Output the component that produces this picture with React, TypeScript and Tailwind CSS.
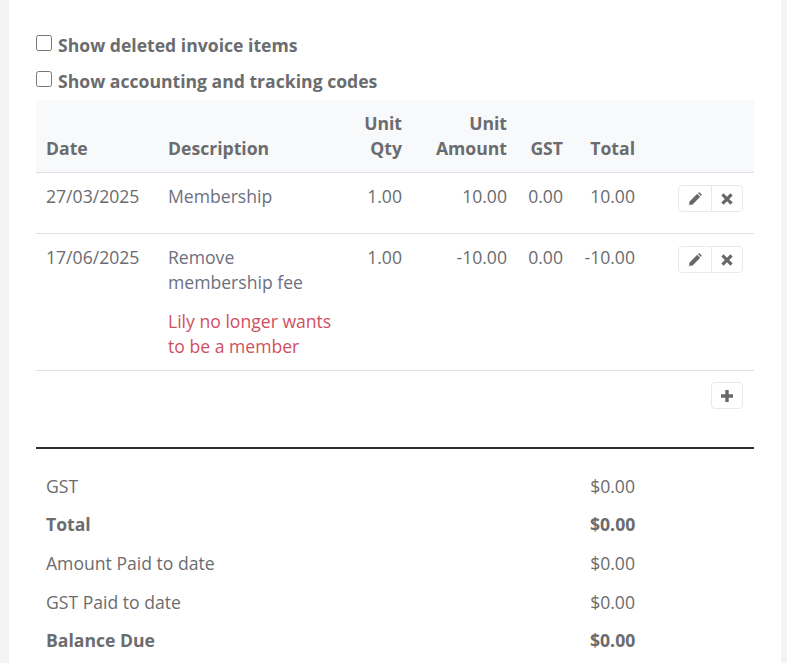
import React from "react";

function Pencil() {
  return (
    <svg width="14" height="14" viewBox="0 0 14 14" className="block">
      <path d="M0.8 13.2 L1.6 9.4 L9.2 1.8 L12.2 4.8 L4.6 12.4 Z" fill="#66686a" />
      <path d="M10 1.1 L10.8 0.4 Q11.3 0.1 11.8 0.5 L13.5 2.2 Q13.9 2.7 13.5 3.2 L12.9 4 Z" fill="#66686a" />
      <path d="M0.8 13.2 L1.2 11.2 L2.8 12.8 Z" fill="#e8a15a" />
    </svg>
  );
}
function Cross() {
  return (
    <svg width="12" height="12" viewBox="0 0 12 12" className="block">
      <path d="M2.6 2.6 L9.4 9.4 M9.4 2.6 L2.6 9.4" stroke="#66686a" strokeWidth="3.2" strokeLinecap="square" />
    </svg>
  );
}
function Plus() {
  return (
    <svg width="12" height="12" viewBox="0 0 12 12" className="block">
      <path d="M6 0 V12 M0 6 H12" stroke="#66686a" strokeWidth="3.4" />
    </svg>
  );
}

function Actions() {
  return (
    <div className="flex justify-end">
      <div className="flex h-[27px] w-[65px] rounded-[4px] border border-[#e7eaec] bg-white">
        <span className="flex w-[33px] items-center justify-center border-r border-[#e7eaec]"><Pencil /></span>
        <span className="flex flex-1 items-center justify-center"><Cross /></span>
      </div>
    </div>
  );
}

const grid = "grid grid-cols-[122px_196px_58px_105px_56px_72px_109px]";

function Total({ label, value, bold }: { label: string; value: string; bold?: boolean }) {
  return (
    <div className={`flex h-[38.6px] items-center pl-[10px] ${bold ? "font-bold" : ""}`}>
      <span className="w-[544px] shrink-0 whitespace-nowrap">{label}</span>
      <span className="w-[45px] shrink-0 whitespace-nowrap text-right">{value}</span>
    </div>
  );
}

export default function App() {
  return (
    <div className="h-[663px] overflow-hidden bg-[#f3f3f4] pl-[9px] pr-[6px] font-['Open_Sans',sans-serif] text-[17.6px] leading-[25px] text-[#6b6c6e]">
      <div className="h-full bg-white pl-[27px] pr-[27px] pt-[27px]">
        <label className="flex h-[36px] items-center font-bold">
          <input type="checkbox" className="mr-[6px] mb-[4px] h-[16px] w-[16px]" />
          Show deleted invoice items
        </label>
        <label className="mb-[1px] flex h-[36px] items-center font-bold">
          <input type="checkbox" className="mr-[6px] mb-[4px] h-[16px] w-[16px]" />
          Show accounting and tracking codes
        </label>

        <div className={`${grid} h-[73px] items-end border-b border-[#dee2e6] bg-[#f8f9fa] pb-[11px] font-bold`}>
          <div className="pl-[10px]">Date</div>
          <div className="pl-[10px]">Description</div>
          <div className="pr-[10px] text-right">Unit<br />Qty</div>
          <div className="pr-[10px] text-right">Unit<br />Amount</div>
          <div className="pr-[10px] text-right">GST</div>
          <div className="pr-[10px] text-right">Total</div>
          <div />
        </div>

        <div className={`${grid} h-[61px] border-b border-[#dee2e6] pt-[11px]`}>
          <div className="pl-[10px]">27/03/2025</div>
          <div className="pl-[10px] text-[#6c7080]">Membership</div>
          <div className="pr-[10px] text-right">1.00</div>
          <div className="pr-[10px] text-right">10.00</div>
          <div className="pr-[10px] text-right">0.00</div>
          <div className="pr-[10px] text-right">10.00</div>
          <div className="pr-[11px] pt-[1px]"><Actions /></div>
        </div>

        <div className={`${grid} h-[137px] border-b border-[#dee2e6] pt-[11px]`}>
          <div className="pl-[10px]">17/06/2025</div>
          <div className="pl-[10px] pr-[20px]">
            <div className="text-[#6c7080]">Remove membership fee</div>
            <div className="mt-[14px] text-[#cf5060]">Lily no longer wants to be a member</div>
          </div>
          <div className="pr-[10px] text-right">1.00</div>
          <div className="pr-[10px] text-right">-10.00</div>
          <div className="pr-[10px] text-right">0.00</div>
          <div className="pr-[10px] text-right">-10.00</div>
          <div className="pr-[11px] pt-[1px]"><Actions /></div>
        </div>

        <div className="flex h-[78px] justify-end border-b-2 border-[#2f2f2f] pr-[11px] pt-[11px]">
          <span className="flex h-[27px] w-[32px] items-center justify-center rounded-[4px] border border-[#e7eaec] bg-white"><Plus /></span>
        </div>

        <div className="pt-[18px]">
          <Total label="GST" value="$0.00" />
          <Total label="Total" value="$0.00" bold />
          <Total label="Amount Paid to date" value="$0.00" />
          <Total label="GST Paid to date" value="$0.00" />
          <Total label="Balance Due" value="$0.00" bold />
        </div>
      </div>
    </div>
  );
}
